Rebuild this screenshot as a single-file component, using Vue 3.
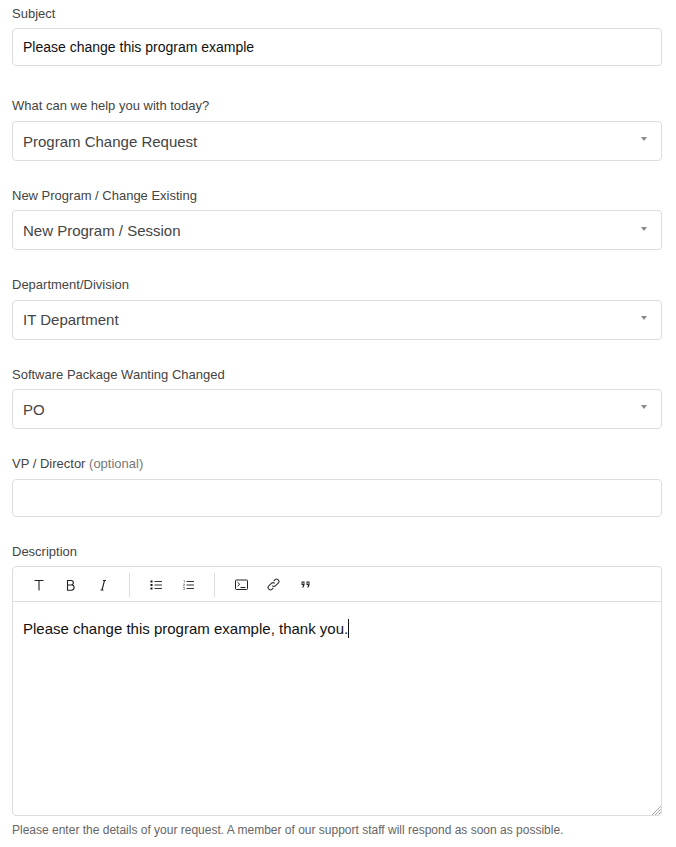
<script setup>
const selects = [
  { label: 'What can we help you with today?', value: 'Program Change Request' },
  { label: 'New Program / Change Existing', value: 'New Program / Session' },
  { label: 'Department/Division', value: 'IT Department' },
  { label: 'Software Package Wanting Changed', value: 'PO' }
]
</script>

<template>
  <form class="form">
    <div class="field first">
      <label class="label">Subject</label>
      <div class="input dark">Please change this program example</div>
    </div>
    <div v-for="(s, i) in selects" :key="s.label" class="field" :class="{ second: i === 0 }">
      <label class="label">{{ s.label }}</label>
      <div class="input select">
        <span>{{ s.value }}</span>
        <span class="caret"></span>
      </div>
    </div>
    <div class="field">
      <label class="label">VP / Director <span class="optional">(optional)</span></label>
      <div class="input"></div>
    </div>
    <div class="field desc">
      <label class="label">Description</label>
      <div class="editor">
        <div class="toolbar">
          <div class="tgroup">
            <button type="button" class="tool">
              <svg width="12" height="12" viewBox="0 0 12 12"><path d="M1.5 1.5h9M6 1.5v10" fill="none" stroke="#222" stroke-width="1.1"/></svg>
            </button>
            <button type="button" class="tool">
              <svg width="12" height="12" viewBox="0 0 12 12"><path d="M2.5 1.5h3.6a2.2 2.2 0 0 1 0 4.5H2.5h4a2.6 2.6 0 0 1 0 5.2h-4z" fill="none" stroke="#222" stroke-width="1.1"/></svg>
            </button>
            <button type="button" class="tool">
              <svg width="12" height="12" viewBox="0 0 12 12"><path d="M6 1.5h3M3.5 11h3M7.5 1.5L5 11" fill="none" stroke="#222" stroke-width="1.1"/></svg>
            </button>
          </div>
          <div class="tgroup">
            <button type="button" class="tool">
              <svg width="12" height="12" viewBox="0 0 12 12"><path d="M4.5 2.5H12M4.5 6H12M4.5 9.5H12" fill="none" stroke="#333"/><path d="M.5 1.5h2v2h-2zM.5 5h2v2h-2zM.5 8.5h2v2h-2z" fill="#111"/></svg>
            </button>
            <button type="button" class="tool">
              <svg width="12" height="12" viewBox="0 0 12 12"><path d="M4.5 2.5H12M4.5 6H12M4.5 9.5H12" fill="none" stroke="#333"/><path d="M1.5 1.5h1v2M1 5h1.5v1.2H1.5M1 7h1.5M1 8.5h1.5v2H1" fill="none" stroke="#777" stroke-width=".7"/></svg>
            </button>
          </div>
          <div class="tgroup last">
            <button type="button" class="tool">
              <svg width="13" height="11" viewBox="0 0 13 11"><rect x=".5" y="1" width="12" height="9.5" rx=".8" fill="none" stroke="#222"/><path d="M2.5 3.2l2.2 2-2.2 2M5.5 8.5h5" fill="none" stroke="#222"/></svg>
            </button>
            <button type="button" class="tool">
              <svg width="13" height="13" viewBox="0 0 13 13"><path d="M5.3 7.7a2.3 2.3 0 0 0 3.3 0l2.6-2.6a2.3 2.3 0 0 0-3.3-3.3L6.7 3M7.7 5.3a2.3 2.3 0 0 0-3.3 0L1.8 7.900a2.3 2.3 0 0 0 3.3 3.3l1.2-1.2" fill="none" stroke="#333" stroke-width="1.1"/></svg>
            </button>
            <button type="button" class="tool">
              <svg width="9" height="7" viewBox="0 0 9 7"><path d="M.5.5h3V4L2.5 6.5H1.3L2 4H.5zM1.500 1.500V3h1V1.500zM5.500.5h3V4L7.500 6.500H6.300L7 4H5.500zM6.500 1.500V3h1V1.500z" fill="#222" fill-rule="evenodd"/></svg>
            </button>
          </div>
        </div>
        <div class="body">Please change this program example, thank you.<span class="cursor"></span></div>
        <svg class="grip" width="9" height="9" viewBox="0 0 9 9"><path d="M8.500 .5l-8 8M8.500 3.500l-5 5M8.500 6.500l-2 2" fill="none" stroke="#555" stroke-width="1" stroke-dasharray="1 .5"/></svg>
      </div>
      <p class="hint">Please enter the details of your request. A member of our support staff will respond as soon as possible.</p>
    </div>
  </form>
</template>

<style scoped>
.form {
  padding: 0 14px 0 12px;
  font-family: "Liberation Sans", Arial, sans-serif;
  color: #222;
}
.field {
  margin-top: 26.4px;
}
.field.first {
  margin-top: 0;
  padding-top: 5px;
}
.field.second {
  margin-top: 31.4px;
}
.label {
  display: block;
  height: 16px;
  line-height: 17px;
  margin-bottom: 7.1px;
  font-size: 13px;
  color: #444;
}
.optional {
  color: #777;
}
.input {
  height: 38px;
  box-sizing: border-box;
  padding: 0 10px;
  display: flex;
  align-items: center;
  justify-content: space-between;
  border: 1px solid #ddd;
  border-radius: 4px;
  background: #fff;
  font-size: 14px;
}
.dark {
  color: #111;
}
.select {
  height: 40px;
  padding-top: 0.9px;
  font-size: 15px;
  color: #444;
}
.caret {
  width: 0;
  height: 0;
  margin-right: 4px;
  margin-bottom: 4px;
  border-left: 3px solid transparent;
  border-right: 3px solid transparent;
  border-top: 4px solid #888;
}
.editor {
  position: relative;
  height: 250px;
  box-sizing: border-box;
  border: 1px solid #ddd;
  border-radius: 4px;
  overflow: hidden;
}
.toolbar {
  height: 35px;
  box-sizing: border-box;
  padding-top: 1px;
  display: flex;
  align-items: center;
  border-bottom: 1px solid #ddd;
}
.tgroup {
  display: flex;
  align-items: center;
  height: 24px;
  padding: 0 10px;
  border-right: 1px solid #ddd;
}
.tgroup.last {
  border-right: 0;
}
.tool {
  width: 32px;
  height: 24px;
  display: flex;
  align-items: center;
  justify-content: center;
  padding: 0;
  border: 0;
  background: none;
}
.body {
  padding: 17px 10px;
  font-size: 15px;
  line-height: 20px;
  color: #111;
}
.cursor {
  display: inline-block;
  width: 1px;
  height: 19px;
  background: #111;
  vertical-align: -4px;
}
.grip {
  position: absolute;
  right: 0;
  bottom: 0;
}
.hint {
  margin: 7px 0 0;
  font-size: 12px;
  line-height: 14px;
  color: #666;
}
</style>
